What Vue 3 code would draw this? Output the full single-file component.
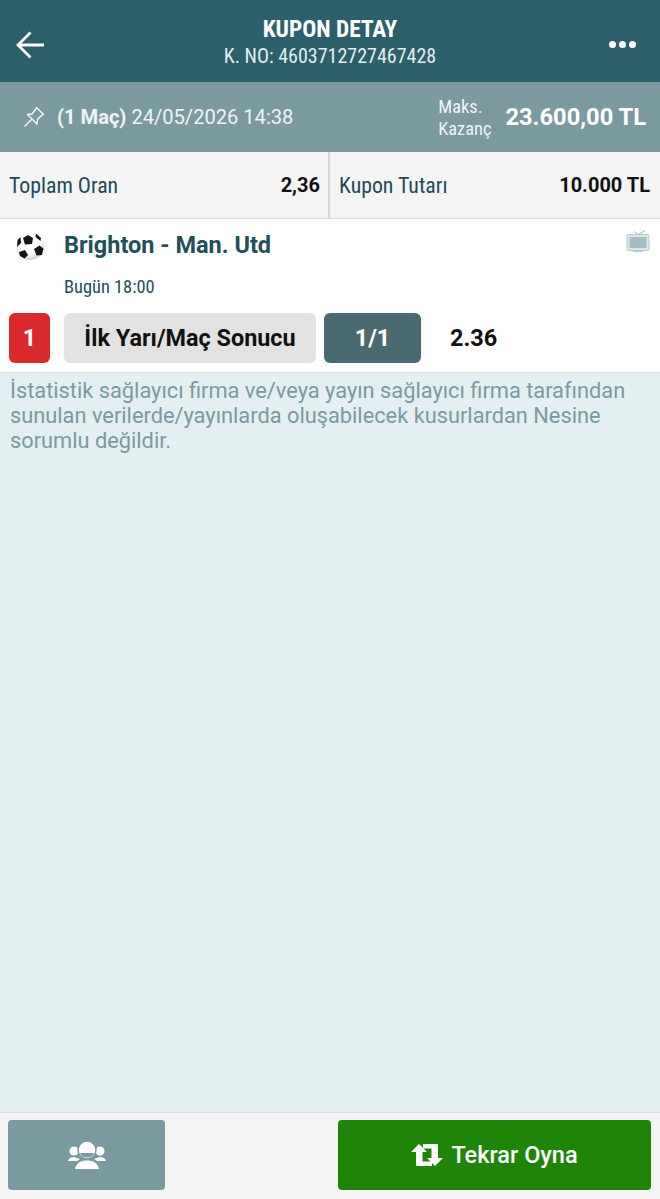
<script setup>
const title = 'KUPON DETAY'
const couponNo = '4603712727467428'
</script>

<template>
  <div class="page">
    <header class="topbar">
      <svg class="back" viewBox="0 0 30 30" width="30" height="30" fill="none" stroke="#fff" stroke-width="2.800">
        <path d="M3 15H29M15.500 2.500 3 15l12.500 12.500" />
      </svg>
      <div class="title">
        <div class="title-main">{{ title }}</div>
        <div class="title-sub">K. NO: {{ couponNo }}</div>
      </div>
      <div class="more"><i></i><i></i><i></i></div>
    </header>

    <section class="summary">
      <svg class="pin" viewBox="0 0 22 22" width="22" height="22" fill="none" stroke="#fff" stroke-width="1.300" stroke-linejoin="round">
        <path d="M13.500 1.500 20.500 8.500 18.500 9.500 14.500 13.500 14 18 4.500 8.500 9 8 12.500 3.500Z M8.500 13.500 1.500 20.500" />
      </svg>
      <div class="summary-text"><b>(1 Maç)</b> 24/05/2026 14:38</div>
      <div class="max-label">Maks.<br />Kazanç</div>
      <div class="max-value">23.600,00 TL</div>
    </section>

    <section class="totals">
      <div class="total-cell first">
        <span class="total-label">Toplam Oran</span>
        <b>2,36</b>
      </div>
      <div class="total-cell">
        <span class="total-label">Kupon Tutarı</span>
        <b>10.000 TL</b>
      </div>
    </section>

    <section class="event">
      <div class="event-head">
        <svg class="ball" viewBox="0 0 30 30" width="30" height="30">
          <defs>
            <radialGradient id="ball-shade" cx="45%" cy="35%" r="70%">
              <stop offset="60%" stop-color="#fff" />
              <stop offset="100%" stop-color="#c4c4c4" />
            </radialGradient>
          </defs>
          <circle cx="15" cy="15" r="14" fill="url(#ball-shade)" />
          <path d="M8 7 13 4l5 3-1 6-7 .500Z M19 18l5.500-3.500 4 3-1.500 6.500-5.500.500Z M4 21l6-2 3 5-3.500 3.500-4.500-2.500Z M2.500 9l3-3 .500 6-4 4Z M21 2.500l5 4.500-.500 3-5-4Z" fill="#151515" />
        </svg>
        <div class="teams">Brighton - Man. Utd</div>
        <svg class="tv" viewBox="0 0 24 24" width="24" height="24">
          <path d="M8 1.500 12 4.500 19 .500" fill="none" stroke="#9fb9bf" stroke-width="1" />
          <rect x="1" y="4.500" width="22" height="16" rx="1.500" fill="#dbe6e9" stroke="#b5cace" />
          <rect x="3.500" y="7" width="17" height="11" fill="#a4bec4" />
          <rect x="7" y="20.500" width="10" height="1.500" fill="#b5cace" />
        </svg>
      </div>
      <div class="event-time">Bugün 18:00</div>
      <div class="pick-row">
        <div class="pick-no">1</div>
        <div class="pick-market">İlk Yarı/Maç Sonucu</div>
        <div class="pick-value">1/1</div>
        <div class="pick-odd">2.36</div>
      </div>
    </section>

    <main class="content">
      <p>İstatistik sağlayıcı firma ve/veya yayın sağlayıcı firma tarafından sunulan verilerde/yayınlarda oluşabilecek kusurlardan Nesine sorumlu değildir.</p>
    </main>

    <footer class="actions">
      <button class="btn-social">
        <svg viewBox="0 0 38 28" width="38" height="28" fill="#fff">
          <circle cx="6" cy="10" r="4.500" />
          <circle cx="32" cy="10" r="4.500" />
          <path d="M0 20c1-3 3-4 6-4l6 2-3 2Z M38 20c-1-3-3-4-6-4l-6 2 3 2Z" />
          <circle cx="19" cy="9" r="9" stroke="#7a9aa0" stroke-width="1.500" />
          <path d="M12 12h14c-1 3-4 4.500-7 4.500s-6-1.500-7-4.500Z" fill="#7a9aa0" />
          <path d="M7 28c1-6 6-8.500 12-8.500s11 2.500 12 8.500Z" />
        </svg>
      </button>
      <button class="btn-replay">
        <svg viewBox="0 0 32 22" width="32" height="22" fill="#fff">
          <path d="M8 0l8 8h-4.500v9.500H21V22H5V8H0Z" />
          <path d="M24 22l-8-8h4.500V4.500H12V0h15v14h5Z" />
        </svg>
        <span>Tekrar Oyna</span>
      </button>
    </footer>
  </div>
</template>

<style scoped>
.page {
  width: 660px;
  height: 1199px;
  display: flex;
  flex-direction: column;
  background: #e4eff1;
  font-family: Roboto, "Liberation Sans", sans-serif;
  overflow: hidden;
}

.topbar {
  height: 82px;
  flex: none;
  display: flex;
  align-items: center;
  justify-content: space-between;
  padding: 7px 24px 0 15px;
  background: #2a5f6b;
  color: #fff;
  box-sizing: border-box;
}

.back {
  display: block;
}

.title {
  text-align: center;
  margin-top: -4px;
  margin-left: 6px;
}

.title-main {
  font-stretch: condensed;
  font-size: 23.400px;
  line-height: 28px;
  font-weight: 700;
}

.title-sub {
  font-stretch: condensed;
  font-size: 20px;
  line-height: 27px;
  color: #e3edef;
}

.more {
  display: flex;
  gap: 3px;
}

.more i {
  width: 7px;
  height: 7px;
  border-radius: 50%;
  background: #fff;
}

.summary {
  height: 70px;
  flex: none;
  display: flex;
  align-items: center;
  padding: 0 14px 0 23px;
  background: #7a9aa0;
  color: #fff;
  box-sizing: border-box;
}

.pin {
  margin-right: 12px;
}

.summary-text {
  flex: 1;
  font-size: 20.100px;
  color: #eef4f5;
}

.max-label {
  font-stretch: condensed;
  font-size: 18.400px;
  line-height: 22px;
  margin: 1px 14px 0 0;
  color: #eef4f5;
}

.max-value {
  font-size: 23.700px;
  font-weight: 700;
}

.totals {
  height: 67px;
  flex: none;
  display: flex;
  background: #f4f4f4;
  border-bottom: 1px solid #dcdcdc;
  box-sizing: border-box;
}

.total-cell {
  flex: 0 0 330px;
  box-sizing: border-box;
  display: flex;
  align-items: center;
  justify-content: space-between;
  padding: 0 10px 0 9px;
  font-size: 20px;
  color: #111;
}

.total-cell.first {
  padding-right: 8px;
  border-right: 2px solid #d6d6d6;
}

.total-label {
  font-stretch: condensed;
  font-size: 21.800px;
  color: #224a54;
}

.event {
  height: 154px;
  flex: none;
  background: #fff;
  border-bottom: 1px solid #d5dfe2;
  box-sizing: border-box;
}

.event-head {
  height: 54px;
  display: flex;
  align-items: center;
  padding: 0 10px 0 15px;
}

.teams {
  flex: 1;
  margin: -2px 0 0 19px;
  font-size: 23.500px;
  font-weight: 700;
  color: #224f5a;
}

.tv {
  margin-top: -8px;
}

.event-time {
  margin: 3px 0 0 64px;
  font-stretch: condensed;
  font-size: 18.400px;
  line-height: 22px;
  color: #224f5a;
}

.pick-row {
  display: flex;
  align-items: center;
  gap: 14px;
  height: 50px;
  margin-top: 15px;
  padding-left: 9px;
}

.pick-no,
.pick-market,
.pick-value {
  height: 50px;
  display: flex;
  align-items: center;
  justify-content: center;
  border-radius: 6px;
  font-size: 23.400px;
  font-weight: 700;
}

.pick-no {
  width: 41px;
  background: #d92b2b;
  color: #fff;
}

.pick-market {
  width: 252px;
  background: #e2e2e2;
  color: #111;
}

.pick-value {
  width: 97px;
  margin-left: -6px;
  background: #4a6a71;
  color: #fff;
}

.pick-odd {
  margin-left: 15px;
  font-size: 23.500px;
  font-weight: 700;
  color: #111;
}

.content {
  flex: 1;
  padding: 5px 10px;
}

.content p {
  margin: 0;
  font-size: 21.800px;
  line-height: 25px;
  color: #7a9aa0;
}

.actions {
  height: 87px;
  flex: none;
  display: flex;
  justify-content: space-between;
  align-items: flex-start;
  padding: 7px 9px 0 8px;
  background: #f4f4f4;
  border-top: 1px solid #d5dfe2;
  box-sizing: border-box;
}

.actions button {
  height: 70px;
  border: none;
  border-radius: 4px;
  display: flex;
  align-items: center;
  justify-content: center;
  padding: 0;
  color: #fff;
}

.btn-social {
  width: 157px;
  background: #7a9aa0;
}

.btn-replay {
  width: 313px;
  gap: 8px;
  background: #1f8508;
  font-family: Roboto, sans-serif;
  font-size: 23.500px;
  font-weight: 500;
}
</style>
